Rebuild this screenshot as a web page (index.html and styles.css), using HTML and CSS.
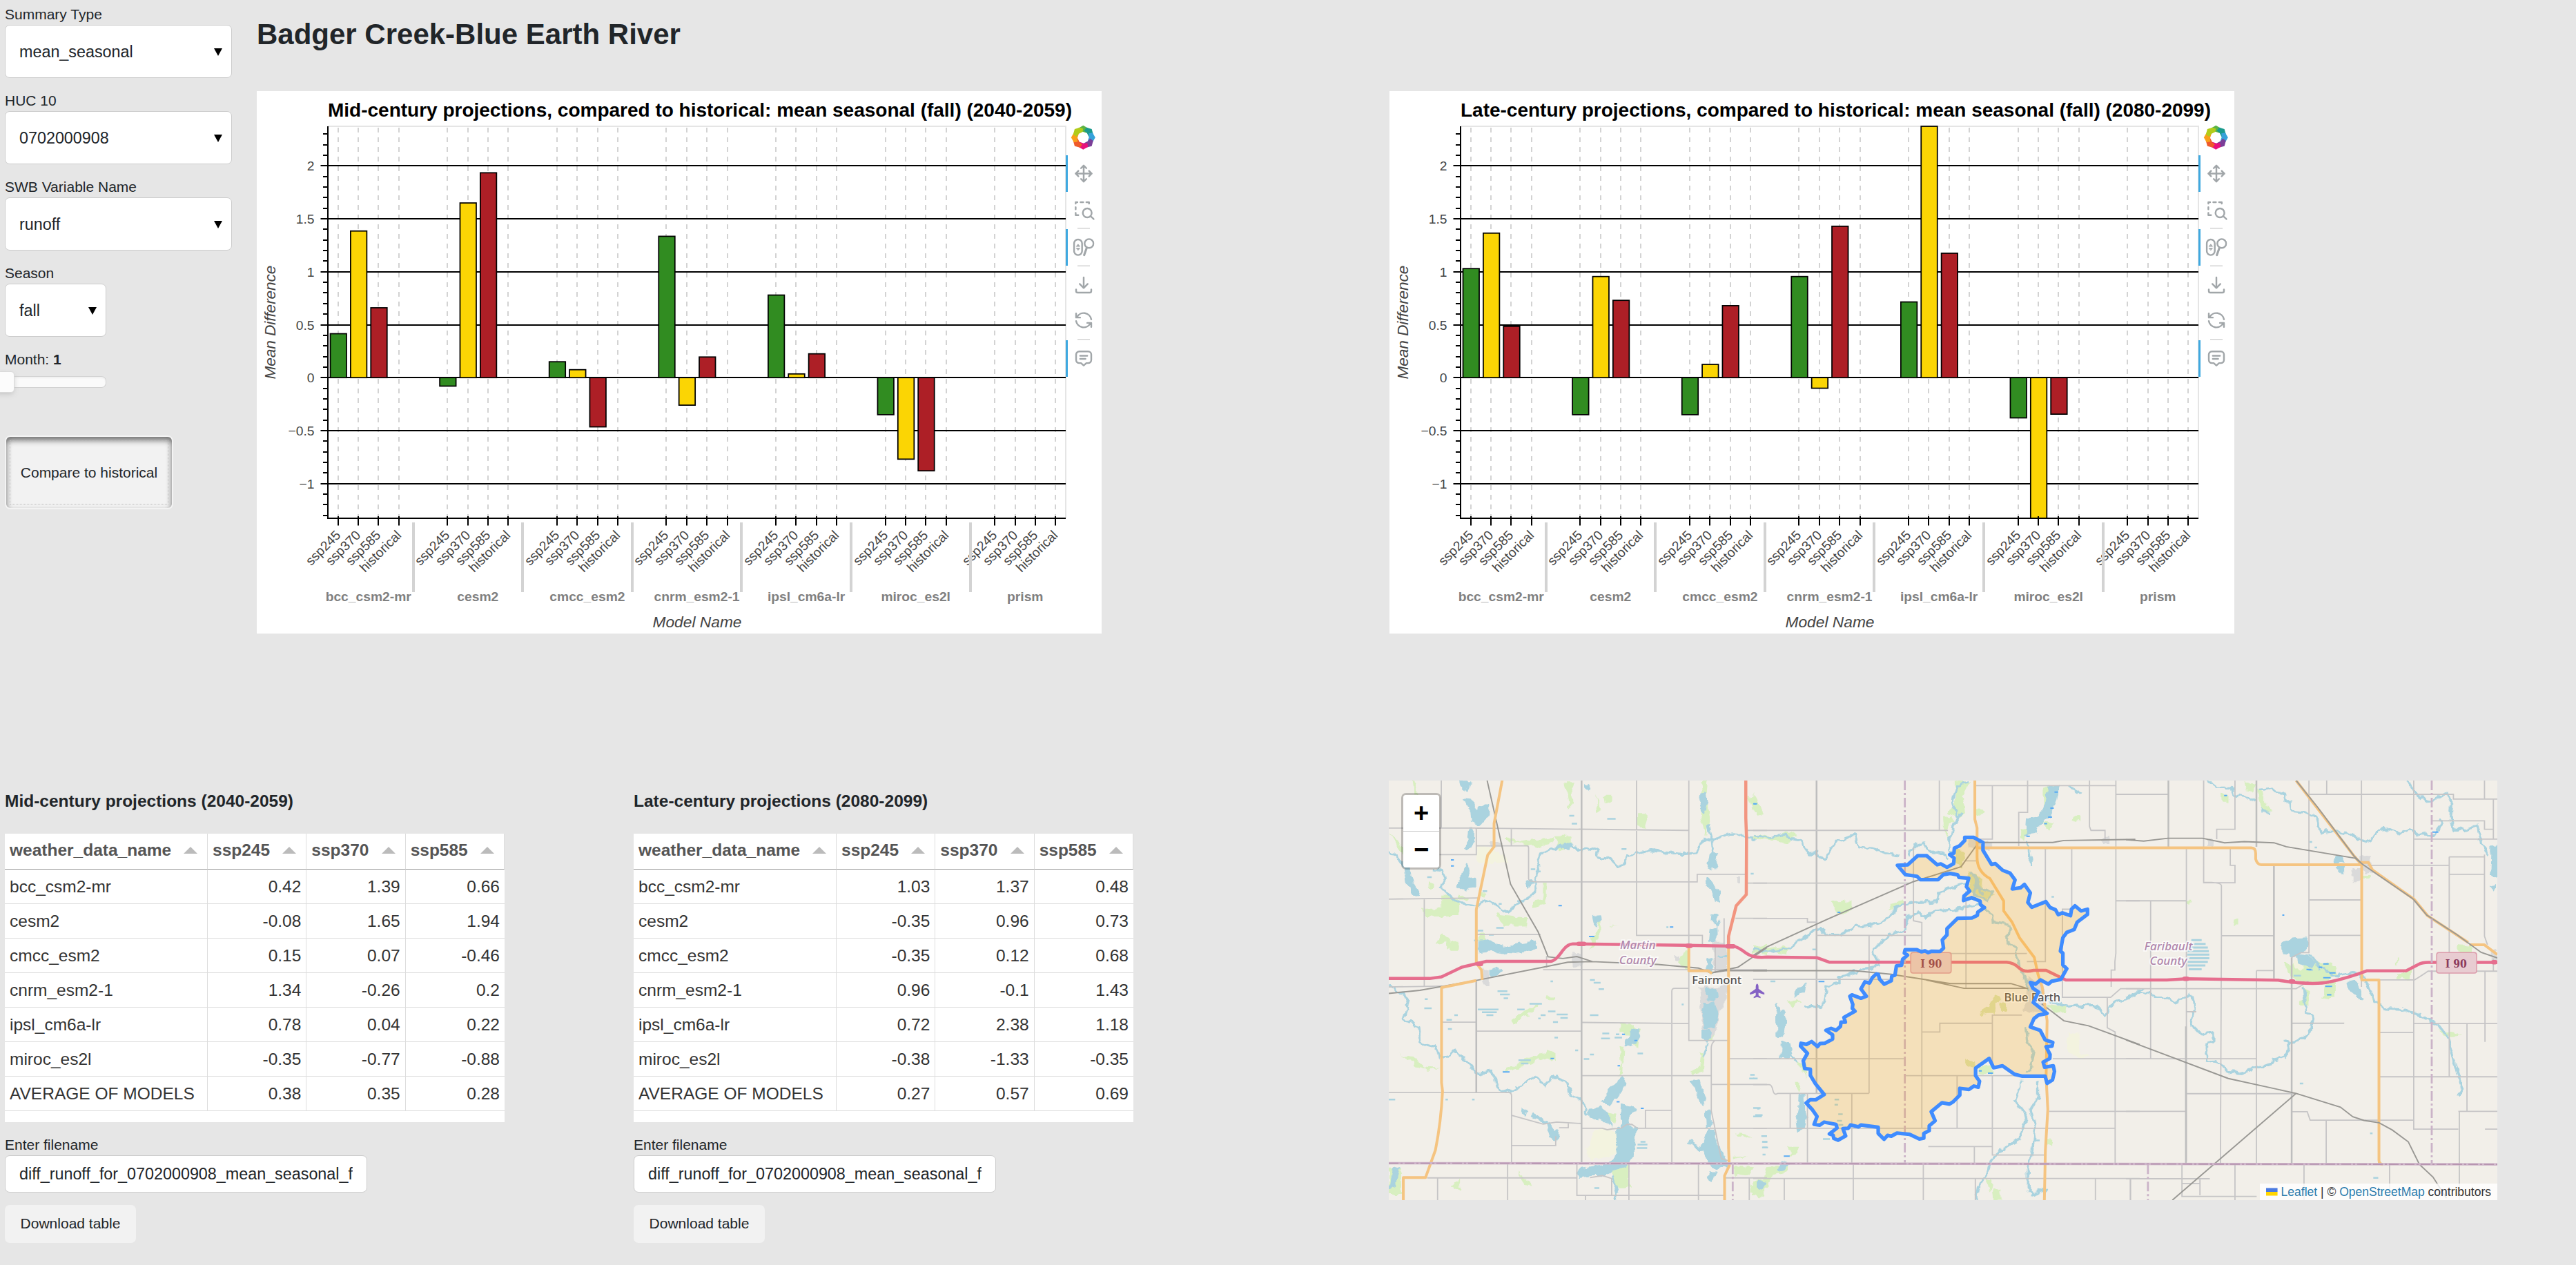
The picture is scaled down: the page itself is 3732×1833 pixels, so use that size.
FILE: index.html
```html
<!DOCTYPE html>
<html lang="en">
<head>
<meta charset="utf-8">
<title>Badger Creek-Blue Earth River</title>
<link rel="stylesheet" href="styles.css">
</head>
<body>
<svg class="defs" width="0" height="0" aria-hidden="true">
  <symbol id="i-pan" viewBox="0 0 24 24"><path d="M12 3v18M3 12h18M9 6l3-3 3 3M9 18l3 3 3-3M6 9l-3 3 3 3M18 9l3 3-3 3"/></symbol>
  <symbol id="i-box" viewBox="0 0 24 24"><circle cx="16" cy="15.5" r="5"/><path d="M20 19.500l3.500 3M3 5v-1.500h2M8.500 3.500h3M15 3.500h3v1.500M3 9v2.500M3 15.500v2.500h3"/></symbol>
  <symbol id="i-wheel" viewBox="0 0 24 24"><rect x="1.2" y="3.500" width="9" height="17.500" rx="4.500"/><path d="M3.700 11.200h4M5.700 9l-1.300 1.500h2.600zM5.700 15.500l-1.300-1.500h2.600zM3.700 13.300h4" class="thin"/><circle cx="18" cy="8" r="5"/><path d="M15.500 12.500l-3 8.500" class="thick"/></symbol>
  <symbol id="i-save" viewBox="0 0 24 24"><path d="M3.500 17v1.700a1.800 1.800 0 0 0 1.800 1.800h13.400a1.800 1.800 0 0 0 1.800-1.800V17M7.500 10.800l4.500 4.500 4.500-4.500M12 3.500v11.500"/></symbol>
  <symbol id="i-reset" viewBox="0 0 24 24"><path d="M20.500 11A8.600 8.600 0 0 0 4.500 8.500M3.500 4.500v4.500h4.500M3.500 13a8.600 8.600 0 0 0 16 2.500M20.500 19.500v-4.500h-4.500"/></symbol>
  <symbol id="i-hover" viewBox="0 0 24 24"><path d="M7 4.500h10a3.500 3.500 0 0 1 3.500 3.500v6a3.500 3.500 0 0 1-3.500 3.500h-2l-3 2.700L9 17.500H7a3.500 3.500 0 0 1-3.500-3.500V8a3.500 3.500 0 0 1 3.500-3.500zM8 9.300h8M8 12.700h6"/></symbol>
</svg>

<section class="top">
  <aside class="controls">
    <label class="field"><span>Summary Type</span><span class="select">mean_seasonal</span></label>
    <label class="field"><span>HUC 10</span><span class="select">0702000908</span></label>
    <label class="field"><span>SWB Variable Name</span><span class="select">runoff</span></label>
    <label class="field narrow"><span>Season</span><span class="select">fall</span></label>
    <div class="month">Month: <b>1</b></div>
    <div class="slider"><div class="handle"></div></div>
    <button class="compare"><span>Compare to historical</span></button>
  </aside>
  <div class="plot-col">
    <h1>Badger Creek-Blue Earth River</h1>
    <figure class="plot" id="mid"></figure>
  </div>
  <div class="plot-col second">
    <figure class="plot" id="late"></figure>
  </div>
</section>

<section class="bottom">
  <div class="table-col">
    <h2>Mid-century projections (2040-2059)</h2>
    <div class="tabulator">
      <table>
        <thead><tr><th>weather_data_name</th><th>ssp245</th><th>ssp370</th><th>ssp585</th></tr></thead>
        <tbody>
          <tr><td>bcc_csm2-mr</td><td>0.42</td><td>1.39</td><td>0.66</td></tr>
          <tr><td>cesm2</td><td>-0.08</td><td>1.65</td><td>1.94</td></tr>
          <tr><td>cmcc_esm2</td><td>0.15</td><td>0.07</td><td>-0.46</td></tr>
          <tr><td>cnrm_esm2-1</td><td>1.34</td><td>-0.26</td><td>0.2</td></tr>
          <tr><td>ipsl_cm6a-lr</td><td>0.78</td><td>0.04</td><td>0.22</td></tr>
          <tr><td>miroc_es2l</td><td>-0.35</td><td>-0.77</td><td>-0.88</td></tr>
          <tr><td>AVERAGE OF MODELS</td><td>0.38</td><td>0.35</td><td>0.28</td></tr>
        </tbody>
      </table>
    </div>
    <label class="file"><span>Enter filename</span><input type="text" value="diff_runoff_for_0702000908_mean_seasonal_fall"></label>
    <button class="download">Download table</button>
  </div>
  <div class="table-col">
    <h2>Late-century projections (2080-2099)</h2>
    <div class="tabulator">
      <table>
        <thead><tr><th>weather_data_name</th><th>ssp245</th><th>ssp370</th><th>ssp585</th></tr></thead>
        <tbody>
          <tr><td>bcc_csm2-mr</td><td>1.03</td><td>1.37</td><td>0.48</td></tr>
          <tr><td>cesm2</td><td>-0.35</td><td>0.96</td><td>0.73</td></tr>
          <tr><td>cmcc_esm2</td><td>-0.35</td><td>0.12</td><td>0.68</td></tr>
          <tr><td>cnrm_esm2-1</td><td>0.96</td><td>-0.1</td><td>1.43</td></tr>
          <tr><td>ipsl_cm6a-lr</td><td>0.72</td><td>2.38</td><td>1.18</td></tr>
          <tr><td>miroc_es2l</td><td>-0.38</td><td>-1.33</td><td>-0.35</td></tr>
          <tr><td>AVERAGE OF MODELS</td><td>0.27</td><td>0.57</td><td>0.69</td></tr>
        </tbody>
      </table>
    </div>
    <label class="file"><span>Enter filename</span><input type="text" value="diff_runoff_for_0702000908_mean_seasonal_fall"></label>
    <button class="download">Download table</button>
  </div>
  <div class="map">
    <svg class="tiles" viewBox="34 27 4496 1490" preserveAspectRatio="none">
      <defs><filter id="meander" filterUnits="userSpaceOnUse" x="-20" y="0" width="1700" height="1540" color-interpolation-filters="sRGB"><feTurbulence type="fractalNoise" baseFrequency="0.035" numOctaves="2" seed="4"/><feDisplacementMap in="SourceGraphic" scale="26" xChannelSelector="R" yChannelSelector="G"/></filter></defs>
      <!-- west tile group -->
      <g filter="url(#meander)">
        <path class="green" d="M128 27l8 50 12-4-10-46zM745 30h42l-12 30 2 50-10 18-6-40zM905 80h35v20l-30 8zM1042 143h32l4 55-36-4zM1300 27h28l-6 60 12 80-12 60-20-70zM1490 80l30 5 30 60-40-15zM705 225h70v40l-50 14zM660 390h14v75l-55 16v-25l40-10zM250 430l70 20v60H180l-12-28h82zM320 430l35 10v10h-35zM400 420l30 10-10 12zM470 500l130 15-6 28H500l-20-20zM875 80l20 55-15 5zM200 390h12v22h-16zM220 610l30-35 30 10 10 30-20 5v-20zM285 600h35l-3 34h-35zM400 570h20l10 30-30 20zM530 875l60-30 40-22 20-5-30 25-60 36-20 15zM490 1065l70-40 80-20 40-20 30 10v30l-50-12-80 30zM680 795h26v12h-30zM970 890h40l45 20-10 60-30-10-10-35h-35zM970 970l10 70-20 40 20-10 12-100zM1225 640l20-10 10 30-10 45-35-30zM1255 1060l40-15 5-50 15 10-5 55-50 10zM1305 910h55l-12 40-25 5zM900 1200l60 15-10 35-50-30zM940 1390h68v80h-60zM980 1380l30-60v50zM34 1395l50 10v95H34zM290 1470l30-25v35zM555 1420l50 30 10 20-30-10zM1435 1395l80 5-20 30-60-5zM1500 1460l60-20v70l-60-20zM1550 610l18-5v40h-18zM865 580l30-60v40l-25 50-25 20zM925 505l5 35 35 4-35-2zM1435 1280l70 10-30 10zM1430 1360l60-5-60 15zM70 1000l60 10 50 35 60 4-40 8-50-15-50-35zM34 210l40 30 30 50-12 0zM510 228l60 18 70-10 60-5v14l-70 20-70-16-60-8z"/>
        <path class="sand" d="M389 265l45-3 60 30 30 28H385zM870 1270l100-2v75l-110 35-30-30z"/>
        <path class="town" d="M415 695l30 10v55h-20l-20-30zM780 640h40v45l-40 5zM1345 600h50l20 50-10 50-50 10zM1295 760h80l30-20v60l-30 40-10 75-25 30-35-35zM445 245h50v20h-50zM1190 645l25 5v20h-20zM1445 365h14v25h-14z"/>
        <path class="lake" d="M340 92l25 2 25 40 30-20h18v30l-35 40-30-12-5-30zM325 30h38l-8 35-25-15zM360 200h18v40l-12 30h-18zM320 390l30-70 5 60 28-6v30l-35 14-40-20zM400 600l40-4 60 24 70-14 60-8 6 24-80 18-100-8-56 6zM450 700l20-10 18 12-15 15-23 5zM98 340h22l5 40 35 55-14 3-40-50zM1300 75l18-2 8 30-15 40-14-40zM1335 285h32l-10 60-30-10zM1325 370l50 50v35h-16l-14-45-20-5zM1345 500h15v30l-17-5zM1335 555l30-10v50l-35 5zM865 510l28-2 2 20-22 15zM1015 910l30-3 6 30-38 38-16-10 10-30zM920 1125l60-42 18 20-40 50-30 22-28-5 20-20zM980 1175l60 15-30 35-10 30h-20zM845 1195l45-3 30 15 10 40-40-20-40-5zM955 1265l50-15 32 15-10 85-30 45-60 15-30 20-50-2-50 8-5-15 15-18 70-6 60-20 15-45zM675 1245l15-3 35 45-10 20-25-15zM620 1210l55 28-10 6-50-25zM1265 1098l30-5 12 35 12 30-12 15-20-30zM1320 1200h18v55h-14zM1330 1270l20-5 10 50 50 75-50 20-30-25-25-55zM1322 770l35-3 10 30-15 12-25-5zM1315 820l35-5 18 40-12 45-38 5-12-40zM1305 910l30 5v25l-10 15-20-10zM1335 1420h25l-15 30-18-10zM50 1400l28 5-20 60-20 10zM745 250l30 2-10 22-25-8zM590 390l20-10 10 10-25 14zM835 37l15 5-5 20-15-10zM1325 660h20v50l-20-8zM575 1195l22 8-6 12-14-8zM1540 1445l20 8-8 22-18-10zM1252 1310l60 25-15 8zM1365 530l14-2-8 14z"/>
        <path class="creek" d="M34 275l30 20 30 35 10 20M210 345l40 5 15 25-20 30 45 40 40 20 50 5 20-5 30-12 30 12 55 28 60-40 40-15 15-20 0-60 15-20-8-30 20-25 50-15 40-10 40 5 30 15 45-14 20 10-5 20 55 10 30 26 20-4 20-30 90-20 70 5 60 8 60-5 30-50 40 5 50-20 40-5 40 15 40 5M1330 180l15 60 5 50M34 750l60 40 20 20-20 65 60 25 5 55 30 10 40 10 10 40 40-10 20-20 30 20 60 60 60-5 15 20 5 40 40 15 50-18 70-40 40 30 30-30 60 25 15 50 45 15 20 45 60 0 40 45M940 1430l20 60-6 27M1330 960l-20 50M1545 630l23-10M1370 650h40"/>
      </g>
      <path class="pond" d="M766 152h20M776 180h22M920 163h34M978 270h20M190 370h18M610 342h18M630 350h20M395 560h22M470 550h30M415 420h18M480 465h12M555 455h20M440 575h20M380 595h16M475 775h40M485 787h40M500 800h18M395 840h84M412 850h60M430 860h28M180 803h12M178 836h30M300 860h14M268 877h22M274 909h16M605 820h50M555 840h30M680 847h30M650 860h20M715 858h45M730 870h30M700 885h20M640 872h10M850 860h34M900 925h28M895 943h36M950 940h30M955 928h14M1043 996h22M850 1000h16M825 1016h22M790 985h12M706 940h14M1043 1320h40M1040 1332h42M1055 1310h20M868 1474h20M1500 1072h18M1496 1085h20M34 1160h26M264 1160h10M372 1160h10M1520 1215h30M1528 1192h10M1545 1290h23M1548 1310h20M1548 1330h20M1502 358h12M690 740h10M1222 822h8M1160 548h8M850 735h20M865 745h28M885 768h22M560 1020h50M570 1032h30"/>
      <path class="pond deep" d="M722 471h14M846 581h22M496 1062h28M962 1040h10M1174 547h14M690 1014h14M286 309h12M286 330h12M1516 110h12M980 928h12M1056 1191h12M958 1168h12M1030 950h12"/>
      <!-- central tile group -->
      <g transform="translate(1512 0)">
       <g filter="url(#meander)">
        <path class="green" d="M820 27l60 5-30 50 10 60-20 20-50-20 30-20zM770 160l30-10 20 20-40 30 15 40-20-30zM905 130l32 5v15l-34-2zM0 75l40 70-25 5zM0 215l90 10 60-15 25 10-30 30-60-10-85-3zM315 458l84-4v38l-55 15-15-25zM560 465l50-15v20l-60 20zM0 612l60 10 90-10-15 30-80-10-55 5zM1180 45h50l-20 60-30 25zM1175 170l46 10-20 28zM1085 200l25-5-5 40-22-4zM1300 155h22v15h-24zM145 810l45-5-30 28zM140 1325h45v28l-40 8 10-15zM50 1400l90-5v22l-60 10-20 40-40 30H0v-50l40-5zM915 1045l50-5 10 30-60-5zM945 1445l25 5-10 40zM970 1470l30 10 5 35h-30zM1190 1300h20v20h-20zM160 1010l50 30 5 50-20-40zM1190 820l75 10 10 20-40 2-50-20zM175 1100h20l-15 40z"/>
        <path class="sand" d="M1275 920l45 5 5 65 40 20-60-2-30-20z"/>
        <path class="olive" d="M915 845l40-15 0 25-30 3zM955 820l30-30 25 10-25 20v35h-30zM1000 815h25v38h-22zM820 270l40 10-10 60-30-20zM870 345l60 30-5 30 55 30-50 20-50-40zM860 1020l40 5-5 25-35-10z"/>
        <path class="town" d="M870 232l60 5 40 20-10 25-90-20zM1115 730l60 10 10 60-10 50-80-5 10-60zM1415 230l30-5v25h-25z"/>
        <path class="lake" d="M1200 45l40 5-20 60-20 40-50 40-5 25-38 5 5-60 50-10 30-50zM175 765l40-15-5 25-40 20zM98 855l20-15 14 40-8 50-25 8zM190 1145l16-5 2 60 10 20-12 45-25 10-6-40 10-40zM118 955l30 10 10 30-15 25-30-10zM115 1375l28 10-18 22-28 5zM20 1450l30 5-15 22-15-8z"/>
        <path class="creek" d="M0 220l70 10 30-10 90 20 35 45 30 0 35 20 45-60 75-25 15 45 60 5 60 15 45 10M870 30l-40 15-20 50 15 60 20-10-30 40-20 50 0 40 20 10M630 290l20-30 40-10 30 30 50 5 20 20M0 625l60 10 70-10 60-30 80-45 25 25 60 0 60-30 60-5 60-15 50-50 70-15 90-5 5-30 60-20 60-15M480 635l20 10 10 40-60 10-60 20-40 10 0 20-50 10-10 60-25 15-55 0M480 635l70-60 60-15 20-50 40-15 30 20 40-25 90-5 80-20 25 10M1275 40l40 30 20 0M1110 240l20 90M95 815l10 50M130 980l50 45M1165 775l50 40 60 15 50-5 70 0 30 40 40-50 60-15 60-35M1090 1090l-30 70 50 60-25 60 0 20-80 40-30 20-20 60-40 50-10 50M1155 1090v60l-30 50 20 60-15 90-15 50 0 80 20 15 60-20"/>
        <path class="creek" d="M905 375l-10 60 60 20 15-30-60-20-20-40M880 350l30 25 10 50 15 5M930 480l40 20 5 30 65 10-10 60 40 20 10 70 30 50 10 40M1105 900l5 50 30 40-10 40-15 40"/>
       </g>
        <path class="pond" d="M330 1160h18M330 1178h14M345 1212h18M340 1235h20M345 1250h20M283 1300h28M38 1310h20M38 1330h22M38 1355h12M0 1190h30M0 1220h35M1140 1305h22M0 1085h18M70 740h20M1180 268h14M1210 440h10M240 627h15"/>
        <path class="pond deep" d="M1196 157h16M1108 225h14M1180 180h12M342 495h12M952 1066h20M915 1058h12M124 1361h24M0 110h16M1205 125h14M1222 68h14M265 741h24"/>
      </g>
      <!-- east tile group -->
      <g transform="translate(3024 0)">
       <g filter="url(#meander)">
        <path class="green" d="M480 32l50 15-10 15-35-5zM385 75h25v25h-22zM535 55l25 20v30l35 35-40-5-18-50zM248 455h14v12h-14zM435 520h20v18h-24zM640 670l25 10 60-30 55 20 65 15 10 30-50 30-115-8-30-30zM815 745h30v52l-50 5zM720 755l20 20v50h-35v-15h15zM1345 610l60 5v22h-60zM1100 715l60-15-5 32h-55zM960 365h30v10h-30zM990 780l30 40-20-15zM1270 915l100 15-80 5zM1097 658h8v25h-8z"/>
        <path class="sand" d="M680 665h40v32h-40z"/>
        <path class="town" d="M915 338h40v50h-35v-30zM945 295h45v30l15 30-40 5-10-40zM330 235h25v25h-25zM1480 630l26-5v40h-26z"/>
        <path class="lake" d="M635 605l40-18 55-3 12 25-20 25-40 15-45-5zM693 645l50 5 25 30-15 15-50-20zM897 745l25-5 20 20 18 40-20-2-38-28zM848 297h33v22h-30zM860 330h22v25h-22zM1485 260l30-10v130l-33-20 2-60zM1478 405l20-3-8 18zM550 125l32 18-30-5z"/>
        <path class="creek" d="M335 30l30 20 60 0 10 25 50 10 40 20M540 60l50-5 25 20 30-5 5 35 20 0 0 30 50 5 55 20 15 50 60-5 60 10 60 35 40-25 10-20 50-5 40 15 50-15 25 18 60 5 15-20 10-5 15-20-15-15M1140 27l30 40 50 35 60-20 25-10 15 40-5 50 20 40 40 0 50-15 15 60 30 45M0 795l60-20 60 20 40 0 40 20 65-30 10 50-10 60 40 35 50-10 0 30-30 20 5 50 60 15 20 25 70 5 60-25 50 0 10-20 50-10 10-50-15-5M650 970l70-30 30-30 10-50-30-10-10-90M745 640l25 30 15 35M860 720l60-10 35 10 25 30 30 60 40 25 70 3 80 25 70 35 35 40 20 60 40 130-20 20M760 660l50 45 55 20"/>
       </g>
        <path class="pond stripe" d="M265 594h42M255 607h68M250 620h82M248 633h88M248 645h90M248 658h90M250 671h82M250 684h72M255 697h52"/>
        <path class="pond" d="M740 700h18M680 720h30M705 1103h14M990 1280h10M1003 1438h20M745 245h10M765 265h10"/>
        <path class="pond deep" d="M1242 210h25M800 678h22M825 710h25M800 727h30M808 758h28M815 788h18M732 698h20M782 690h14M634 505h8M398 80h12"/>
      </g>

      <!-- minor roads -->
      <path class="road" d="M34 196H385q4 0 4 8V290H240M389 259H595q6 0 6 8V376q0 8 30 11H1285V360H1482M531 196V259M389 196L1251 204M247 27V196M1039 27V577H1306V608M1251 27V950H1410M34 448L400 444M178 448V760M389 574H650M34 760L250 757M389 735V1135M250 885H389M389 917H816M816 886L1251 890M34 1135H520q12 0 12 12V1386M532 1216L660 1247 715 1240 816 1245M762 1245v15H725M532 1323H711V1290M816 1075H1340M816 1262L900 1262 920 1267 940 1264 975 1262 1000 1248H1020L1043 1262H1568M1075 1262V1198H1182M1182 1386V775q0-10 12-10H1251M674 650V692M660 699H1568M1355 952Q1340 960 1342 985V1200Q1352 1240 1368 1310T1385 1370l30 8M1342 1106H1568M1415 1015H1568M1358 610V710M1394 516V610M1440 516H1568M1484 391H1568M1484 204H1568M190 1438H797M232 1438V1517M516 1386V1517M797 1386V1500H1395M832 1517V1500M1008 1386V1517M1290 1386V1517M1400 1438H1568M1496 1438V1517M938 1500V1440L900 1430 850 1437"/>
      <path class="road wide" d="M816 27V1386M1769 27V1138M389 735V1135"/>
      <path class="road" transform="translate(1512 0)" d="M0 204H790M755 27V204M0 391H640M650 264V525l34 6V1262M0 517H220V530H257M257 577H684M470 577V1138M0 733H560M684 641H1110M863 420V765M0 1015H612M0 1107H65q10 0 15 20t20 11H470M150 1138V1262M220 1138V1386M400 1138V1386M0 1262H1466M684 920H757V889H970V860H1090M970 890V1040M612 1075H970M827 1075V1262M970 1075V1357H1190M970 1075H1190M710 1327H970M897 1327V1386M0 1440H1568M126 1440V1517M406 1386V1517M690 1386V1517M901 1440V1517M1388 1440V1517M1530 1440V1517M900 45H1471M970 45V235H910M1113 27V140H1077V260M1364 27V190l6 14H1427V240M1471 27V640l-4 30V700H1452V760M1471 76H1568M1185 268V670H1110M1292 268V480M1471 454H1568M1290 484H1254V797H1450L1490 766H1568M1436 797V905l32 15V1386M1200 1202H1568M1215 1015H1568M863 312H910"/>
      <path class="road" transform="translate(3024 0)" d="M0 76H172M315 27V390H442V328H423V268M442 27V200H368V235M245 268V1380M0 454H245M100 454V1015M0 1015H529M315 388Q387 388 387 400V578M387 578L383 1386M529 702V1386M529 702H600M387 578H600M742 27V638H710L672 655M742 76H1328V93H1506M814 27V76M955 27V760M742 451H955M742 577H955M980 328H1311M1167 27V1265H1348M1311 298V1078M1311 298H1454M1311 360H1454M1167 235H1506M1240 170H1454V200H1490M1490 93V235M1454 290V580l12 30M1454 27V93M1028 735H1170Q1190 725 1225 704H1506M1167 890H1506M1028 922H1167M1383 890V1202M1348 1202H1506M1352 1202V1517M1028 1079H1506M0 766H690L740 740M672 889H885M243 1139H690M0 1202H243M243 848H285M672 1203H735l12 30H1167M812 1233V1386M1456 706V955M1456 1265H1506M0 1441H340M18 1441V1517M300 1441V1500M227 1386V1504H530M722 1392V1517M1069 1392V1517M442 1392V1517M227 1458H300M1490 660V706"/>
      <path class="road wide" transform="translate(3024 0)" d="M172 27V262M529 27V262M600 328V730M672 655V1386M243 900V1386"/>

      <!-- railways -->
      <path class="rail" d="M433 27L528 395 640 565 680 653 740 659 797 652 860 670 1125 680 1290 693 1340 710 1450 690 1568 620M34 783L160 772 400 735 660 690 760 672 860 670M1340 710L1400 702H1568"/>
      <path class="rail" transform="translate(1512 0)" d="M0 648L55 618 300 520 650 386 843 333 910 252M910 247H1215L1260 240 1550 236M0 702H410L560 715 800 748H1045L1115 766M700 735L855 765H1115M1170 820L1260 880 1360 898 1568 965"/>
      <!-- trunk and primary roads -->
      <path class="secondary" d="M494 27L461 180V262L435 292 389 485V675L410 700 413 735M389 737L248 762V1100L252 1130Q246 1240 223 1340L183 1437H93V1517M1251 612V703H1330L1345 712M1412 612V1330L1415 1395 1396 1430V1517"/>
      <path class="secondary" transform="translate(1512 0)" d="M899 27V165L908 195V300Q908 350 960 375L1016 455V490L1050 530 1080 585 1140 655 1155 715 1172 760 1192 880 1188 1080 1195 1195 1185 1340 1181 1517M905 266H2020q18 0 18 20t0 20q6 20 22 20H2468V735H2538V1375q0 15 15 15M2202 27L2437 295 2460 318H2495L2512 345 2680 448 2735 507 2900 602M2437 295L2470 328M2905 610H2965L3018 645"/>
      <path class="primary" d="M1482 27V160L1485 230 1484 432 1443 472 1412 580V612"/>
      <path class="motorway" d="M34 730H200L248 724 330 690 430 669H690Q710 669 740 630Q760 607 780 607L1240 612 1430 615Q1450 617 1480 638T1568 654L1770 656 1820 672H2540Q2570 674 2590 692T2650 701H2700L2780 735H3190L3270 731 3640 736Q3780 755 3850 742T4000 703H4160L4210 680Q4225 673 4250 673H4530"/>
      <path class="rail" transform="translate(3024 0)" d="M0 237L72 242 170 232H310L400 248 480 244 600 248 650 262 930 303 960 325 1165 448 1220 505 1340 573 1440 637 1506 657M0 948L415 1085 690 1138 870 1187 920 1221 965 1234 1025 1242 1080 1268 1145 1310 1190 1390 1245 1435 1300 1510M690 1138L188 1517M690 27L780 125 925 295 960 325"/>
      <!-- borders -->
      <path class="state" d="M34 1386L4530 1390"/>
      <path class="state dash" d="M34 1386L4530 1390"/>
      <path class="county" d="M2127 27V1384M4264 27V1386M1429 1390V1517M3113 1390V1517"/>
      <path class="junction" d="M396 678h12M804 607h22M1246 614h12M1408 616h24M3262 731h10M3692 741h10M4514 672h8"/>

      <!-- labels -->
      <g class="lbl">
        <g class="cty"><text transform="translate(1044 626) scale(2.8 2.45)">Martin</text>
        <text transform="translate(1044 678) scale(2.8 2.45)">County</text>
        <text transform="translate(3196 629) scale(2.8 2.45)">Faribault</text>
        <text transform="translate(3196 681) scale(2.8 2.45)">County</text></g>
        <text transform="translate(1364 749) scale(2.8 2.45)">Fairmont</text>
        <text transform="translate(2644 811) scale(2.8 2.45)">Blue Earth</text>
      </g>
      <path class="plane" transform="translate(1528 774) scale(2.800 2.450)" d="M0-10.500Q2-9.500 2-5.500V-3L10.500 3V5.500L2 2.800V6.500L5 8.800V10.500L0 9-5 10.500V8.800L-2 6.500V2.800L-10.500 5.500V3L-2-3V-5.500Q-2-9.500 0-10.500z"/>
      <g class="shield">
        <rect x="2151" y="638" width="164" height="73" rx="9" ry="8"/><rect x="4284" y="638" width="162" height="73" rx="9" ry="8"/>
        <text transform="translate(2234 690) scale(2.8 2.45)" textLength="31" lengthAdjust="spacingAndGlyphs">I 90</text><text transform="translate(4363 692) scale(2.8 2.45)" textLength="31" lengthAdjust="spacingAndGlyphs">I 90</text>
      </g>

      <!-- watershed outline -->
      <path class="basin" transform="translate(1512 0)" d="M858 229H894L932 247V275L967 325 982 322 1012 346 1042 356 1062 380 1051 412 1084 408 1100 396 1124 426 1114 460 1130 477 1187 457 1204 478 1226 486 1237 503 1254 497 1287 507 1291 484 1305 472 1330 490 1356 484V502L1314 530 1302 556 1272 566 1256 585 1246 633 1256 640V682L1272 695 1248 733 1210 740 1197 750 1165 735 1145 750 1124 744 1135 765 1157 778 1136 815 1192 854 1157 860 1139 872 1124 902 1164 914 1184 948 1215 957 1212 970 1188 972 1204 1000 1203 1014 1176 1027 1182 1045 1217 1040 1222 1060 1214 1090 1192 1102 1184 1077H1092L1060 1070 1011 1040 975 1047 957 1014 902 1048V1075L918 1095 913 1116 895 1112 875 1124 838 1120V1144L812 1167 796 1176 766 1171 722 1203 738 1235 714 1253V1270L692 1280V1297L674 1300 634 1283 583 1279 560 1290 545 1287 531 1301 507 1280V1258L437 1250 427 1257 395 1250 385 1262 364 1263 375 1289 344 1304 327 1298 324 1286 309 1282 340 1261 336 1248 288 1240 270 1251 247 1248 259 1220 239 1195 215 1172 232 1160 253 1161 288 1142 252 1103 232 1074V1052L209 1050 203 1022 220 996 192 970 194 960 216 964 237 954 261 972 271 961 290 960 322 945V930L295 914 316 907 336 914 354 900 356 885H374L368 868 413 846 402 836 404 822 392 793 400 788 437 800 459 793 437 767 453 742 472 746 483 727 499 714 507 715 513 733 531 750 560 738 562 722 575 718 581 685 602 683 606 662 626 647 613 640 616 628H664L682 635 697 632 710 638 724 633 758 634 772 622 767 593 786 575V553L829 516 887 515 909 506 911 494 938 478 922 468 920 455 886 443 853 453 855 437 878 420 865 404 874 374 835 371 829 362 799 357 771 361 750 379H678L664 367 617 361 585 328 627 326 667 294H704L746 326 761 323 786 335 813 322 815 302 797 290 814 285 816 267 837 259 858 240z"/>
    </svg>
    <div class="zoom"><button>+</button><button>−</button></div>
    <div class="attribution"><svg width="18" height="12" viewBox="0 0 18 12"><path fill="#4c7be1" d="M0 0h18v6H0z"/><path fill="#ffd500" d="M0 6h18v6H0z"/></svg><span><a>Leaflet</a> | © <a>OpenStreetMap</a> contributors</span></div>
  </div>
</section>
<script src="plots.js"></script>
</body>
</html>
```
FILE: styles.css
```css
* { box-sizing: border-box; }
body { margin: 0; height: 1833px; overflow: hidden; background: #e6e6e6; color: #212529; font-family: "Liberation Sans", Arial, sans-serif; font-size: 21px; }
button, input { font-family: inherit; color: inherit; }
.defs { position: absolute; }

.top { display: grid; grid-template-columns: 372px 1641px 1fr; height: 1131px; }
.controls { padding: 8px 0 0 7px; }
.field { display: block; width: 329px; height: 125px; }
.field > span:first-child { display: block; height: 28px; line-height: 26px; }
.select { display: flex; align-items: center; justify-content: space-between; height: 77px; padding: 1px 13px 0 20px; background: #fff; border: 1.5px solid #ccc; border-radius: 7px; font-size: 23.330px; }
.select::after { content: ""; border: 6.500px solid transparent; border-top: 11px solid #000; border-bottom: 0; }
.narrow { width: 147px; }
.month { line-height: 26px; }
.slider { height: 17px; width: 147px; margin-top: 11px; background: #fafafa; border: 1px solid #d2d2d2; border-left: 0; border-radius: 0 7px 7px 0; box-shadow: inset 0 2px 2px #f0f0f0; }
.handle { width: 31px; height: 31px; margin: -8px 0 0 -17px; background: #fcfcfc; border: 1px solid #dadada; border-radius: 5px; box-shadow: 0 3px 9px -2px #bbb; }
.compare { display: block; width: 240px; height: 103px; margin: 71px 0 0 2px; padding: 5px; background: #f2f2f2; border: 0; border-radius: 6px; box-shadow: inset 0 5px 9px rgba(0,0,0,.55), 0 0 0 2px #f3f3f3; font-size: 21px; }
.compare span { display: flex; height: 100%; align-items: center; justify-content: center; border: 1px dotted #bbb; white-space: nowrap; }

h1 { margin: 0; height: 132px; padding-top: 25px; font-size: 42px; line-height: 50px; }
.second { padding-top: 132px; }
.plot { margin: 0; width: 1224px; height: 786px; background: #fff; }
.plot svg { display: block; }
.tick { font-size: 19.250px; fill: #444; }
.end { text-anchor: end; }
.group { font-size: 19.250px; font-weight: bold; fill: #808080; text-anchor: middle; }
.axis { font-size: 22.750px; font-style: italic; fill: #444; text-anchor: middle; }
.title { font-size: 28px; font-weight: bold; fill: #000; }
.vgrid { stroke: #d3d3d3; stroke-width: 2; stroke-dasharray: 7 7; }
.line { stroke: #000; stroke-width: 2; }
.sep { stroke: #d3d3d3; stroke-width: 4; }
.bar { stroke: #000; stroke-width: 1.750; }
.tool { fill: none; stroke: #a1a6a9; stroke-width: 1.900; stroke-linecap: round; stroke-linejoin: round; }
.thin { stroke-width: .8; }
.thick { stroke-width: 2.400; }

.bottom { display: grid; grid-template-columns: 911px 1094px 1606px; padding-left: 7px; height: 702px; }
h2 { margin: 0; height: 77px; padding-top: 16px; font-size: 24.500px; line-height: 28px; }
.tabulator { width: 724px; height: 418px; background: #fff; }
table { width: 724px; border-collapse: separate; border-spacing: 0; table-layout: fixed; font-size: 24.500px; color: #333; }
th, td { padding: 0 7px; border-right: 1.500px solid #ddd; text-align: right; }
th:first-child, td:first-child { width: 294px; }
th { height: 52px; text-align: left; color: #555; border-bottom: 1.500px solid #999; padding-bottom: 3px; }
td { height: 50px; border-bottom: 1.500px solid #ddd; }
td:first-child { text-align: left; white-space: nowrap; }
td:last-child { border-right: 0; }
th::after { content: ""; float: right; margin: 9px 7px 0 0; border: 10px solid transparent; border-bottom: 10.500px solid #bbb; border-top: 0; }
.file { display: block; margin-top: 21px; }
.file > span { display: block; height: 27px; line-height: 24px; }
.file input { display: block; width: 525px; height: 54px; padding: 0 20px; border: 1.500px solid #ccc; border-radius: 7px; background: #fff; font-size: 23.330px; }
.download { display: block; width: 190px; height: 55px; margin-top: 18px; padding: 0 0 1px; border: 0; border-radius: 7px; background: #f2f2f2; font-size: 21px; }

.map { position: relative; width: 1606px; height: 608px; background: #f2efe9; overflow: hidden; }
.tiles { display: block; width: 1606px; height: 608px; }
.tiles path, .tiles rect { vector-effect: non-scaling-stroke; }
.green { fill: #d8efc0; }
.sand { fill: #f3f3df; }
.olive { fill: #d3dfa0; opacity: .8; }
.town { fill: #dadada; }
.lake { fill: #aad3df; stroke: #aad3df; stroke-width: 2; stroke-linejoin: round; }
.creek { fill: none; stroke: #aad3df; stroke-width: 3.400; stroke-linejoin: round; }
.pond { fill: none; stroke: #aad3df; stroke-width: 2.500; }
.stripe { stroke-width: 3; }
.deep { stroke: #57aaf5; stroke-width: 2; }
.road { fill: none; stroke: #c6c5c6; stroke-width: 1.800; }
.wide { stroke: #bebebe; stroke-width: 2.500; }
.rail { fill: none; stroke: #999894; stroke-width: 1.900; }
.secondary { fill: none; stroke: #f5c481; stroke-width: 4; stroke-linejoin: round; }
.primary { fill: none; stroke: #f29580; stroke-width: 4.500; stroke-linejoin: round; }
.motorway { fill: none; stroke: #e66e8e; stroke-width: 4.500; stroke-linejoin: round; }
.junction { stroke: #e66e8e; stroke-width: 6.500; stroke-linecap: round; }
.state { fill: none; stroke: #cfb6ca; stroke-width: 3.500; }
.dash { stroke: #b795b0; stroke-width: 1.800; stroke-dasharray: 14 3 3 3; }
.county { fill: none; stroke: #cbb3c8; stroke-width: 2.800; stroke-dasharray: 14 4 3 4; }
.lbl { font-family: "Noto Sans", "Open Sans", sans-serif; font-size: 16.500px; text-anchor: middle; fill: #555; font-weight: 500; stroke: rgba(255,255,255,.75); stroke-width: 3.500; paint-order: stroke; }
.cty { fill: #b087ac; font-style: italic; font-size: 17px; }
.plane { fill: #8461c4; }
.shield rect { fill: #e8ccd1; stroke: #dc9bab; stroke-width: 1.500; }
.shield text { fill: #8b3a5b; font: bold 16px "DejaVu Serif", serif; text-anchor: middle; }
.basin { fill: rgba(255,165,0,.2); stroke: #3f8cff; stroke-width: 5.250; stroke-linejoin: round; }
.zoom { position: absolute; left: 18px; top: 18px; width: 58px; height: 111px; border: 3px solid rgba(0,0,0,.22); border-radius: 7px; background-clip: padding-box; }
.zoom button { display: block; width: 100%; height: 52px; padding: 0; border: 0; background: #fff; color: #000; font: bold 38px/48px "Liberation Sans", sans-serif; }
.zoom button:first-child { border-bottom: 1px solid #ccc; border-radius: 4px 4px 0 0; height: 53px; }
.zoom button:last-child { border-radius: 0 0 4px 4px; }
.attribution { position: absolute; right: 0; bottom: 0; width: 344px; height: 24px; padding: 0 9px; display: flex; align-items: center; gap: 5px; background: rgba(255,255,255,.8); color: #333; font-size: 17.500px; white-space: nowrap; }
.attribution a { color: #2a7cae; }
```
FILE: plots.js
```js
const MODELS = ["bcc_csm2-mr", "cesm2", "cmcc_esm2", "cnrm_esm2-1", "ipsl_cm6a-lr", "miroc_es2l", "prism"];
const SCENARIOS = ["ssp245", "ssp370", "ssp585", "historical"];
const COLORS = ["#318c21", "#fbd504", "#ad1f26"];
const BOX = { left: 103, top: 51, right: 1172, bottom: 619 };
const UNIT = (BOX.right - BOX.left) / 36.4;
const SEPARATORS = [227, 385, 544, 702, 861, 1034];
const y = v => 415.2 - 153.4 * v;
const ySnap = v => Math.round(y(v));
const cx = (g, s) => Math.round(BOX.left + UNIT * (g * 5.4 + s + 0.5));
const barX = (g, s) => BOX.left + UNIT * (g * 5.4 + s + 0.12);
const line = (c, x1, y1, x2, y2) => `<line class="${c}" x1="${x1}" y1="${y1}" x2="${x2}" y2="${y2}"/>`;

function toolbar() {
  const petals = ["#5bb345", "#1a9a8d", "#36a2da", "#7b3f98", "#e8107c", "#ee5a2b", "#f9a01b", "#b2cc1a"];
  let s = '<g transform="translate(1197.3 67.3)">';
  petals.forEach((c, i) => { s += `<path fill="${c}" transform="rotate(${i * 45})" d="M-7 -13.500L0 -17.500 7 -13.500 9 -9 5 -6.500 -1 -8.500 -6 -8z"/>`; });
  s += "</g>";
  [["pan", 119.5], ["box", 172], ["wheel", 226], ["save", 281], ["reset", 332], ["hover", 387]].forEach(([n, c]) => {
    s += `<use class="tool" href="#i-${n}" x="1182.500" y="${c - 15.5}" width="31" height="31"/>`;
  });
  [199, 253.5, 360].forEach(v => { s += `<rect x="1189" y="${v - 1}" width="18" height="1.500" fill="#d3d3d3"/>`; });
  [93, 200, 361].forEach(v => { s += `<rect x="1172" y="${v}" width="3" height="53" fill="#3fa9e0"/>`; });
  return s;
}

function plot(id, title, titleWidth, data) {
  let s = "";
  for (let g = 0; g < 7; g++) for (let k = 0; k < 4; k++) s += line("vgrid", cx(g, k), BOX.top + 2, cx(g, k), BOX.bottom);
  s += `<path d="M103 51H1172V619" fill="none" stroke="#e5e5e5" stroke-width="2"/>`;
  for (const v of [2, 1.5, 1, 0.5, 0, -0.5, -1]) {
    s += line("line", BOX.left - 10.5, ySnap(v), BOX.right, ySnap(v));
    s += `<text class="tick end" x="83.500" y="${y(v) + 7}">${String(v).replace("-", "−")}</text>`;
  }
  for (let t = -13; t <= 23; t++) if (t % 5) s += line("line", 96, ySnap(t / 10), 103, ySnap(t / 10));
  data.forEach((row, g) => row.forEach((v, k) => {
    const a = Math.max(y(Math.max(v, 0)), BOX.top), b = Math.min(y(Math.min(v, 0)), BOX.bottom);
    s += `<rect class="bar" fill="${COLORS[k]}" x="${barX(g, k)}" y="${a}" width="${UNIT * 0.8}" height="${b - a}"/>`;
  }));
  s += line("line", 103, 51, 103, 620) + line("line", 102, 619, 1172, 619);
  MODELS.forEach((m, g) => {
    SCENARIOS.forEach((n, k) => {
      s += line("line", cx(g, k), 616, cx(g, k), 629.5);
      s += `<text class="tick end" transform="translate(${cx(g, k)} 640) rotate(-45)" y="6.500">${n}</text>`;
    });
    s += `<text class="group" x="${BOX.left + UNIT * (g * 5.4 + 2)}" y="739">${m}</text>`;
  });
  SEPARATORS.forEach(x => { s += line("sep", x, 625, x, 726); });
  s += `<text class="title" x="103" y="37" textLength="${titleWidth}">${title}</text>`;
  s += `<text class="axis" x="638" y="776.500">Model Name</text>`;
  s += `<text class="axis" transform="translate(27 335) rotate(-90)" textLength="165">Mean Difference</text>`;
  document.getElementById(id).innerHTML = `<svg width="1224" height="786">${s}${toolbar()}</svg>`;
}

plot("mid", "Mid-century projections, compared to historical: mean seasonal (fall) (2040-2059)", 1078, [
  [0.415, 1.385, 0.66], [-0.08, 1.65, 1.935], [0.15, 0.075, -0.465], [1.335, -0.26, 0.195],
  [0.78, 0.035, 0.225], [-0.35, -0.77, -0.88]]);
plot("late", "Late-century projections, compared to historical: mean seasonal (fall) (2080-2099)", 1087, [
  [1.03, 1.365, 0.485], [-0.35, 0.955, 0.73], [-0.35, 0.125, 0.68], [0.955, -0.1, 1.43],
  [0.715, 2.376, 1.175], [-0.38, -1.335, -0.345]]);
```
